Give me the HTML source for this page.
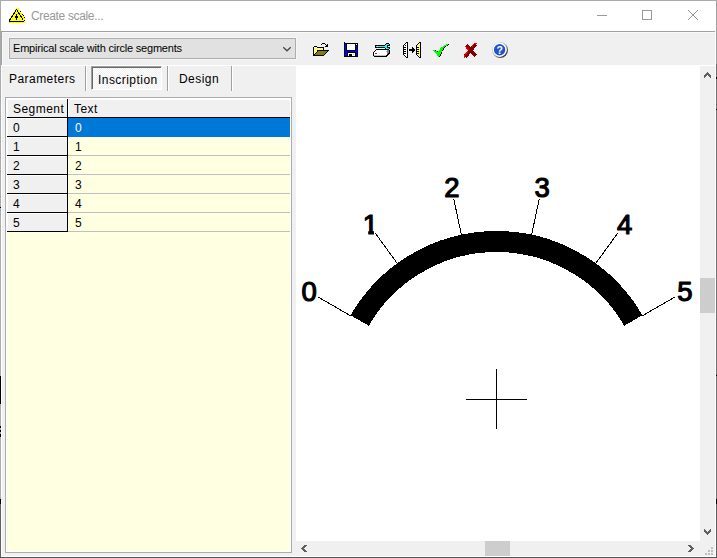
<!DOCTYPE html>
<html>
<head>
<meta charset="utf-8">
<title>Create scale...</title>
<style>
html,body{margin:0;padding:0;}
body{width:717px;height:558px;overflow:hidden;background:#f0f0f0;font-family:"Liberation Sans",sans-serif;font-size:12px;color:#000;}
#win{position:relative;width:717px;height:558px;overflow:hidden;background:#f0f0f0;}
.abs{position:absolute;}
.t{position:absolute;white-space:nowrap;line-height:1;}
/* title bar */
#titlebar{left:1px;top:1px;width:715px;height:30px;background:#fff;}
#title{left:31px;top:10px;font-size:12px;color:#999;letter-spacing:-0.35px;}
/* borders */
#bl{left:0;top:0;width:1px;height:558px;background:linear-gradient(#aaa 0,#aaa 376px,#000 376px,#000 404px,#aaa 404px,#aaa 426px,#000 426px,#000 428px,#aaa 428px,#aaa 430px,#000 430px,#000 432px,#aaa 432px,#aaa 434px,#000 434px,#000 437px,#aaa 437px,#aaa 499px,#000 499px,#000 504px,#606060 504px);}
#br{left:716px;top:0;width:1px;height:558px;background:linear-gradient(#a0a0a0 0,#a0a0a0 64px,#707070 64px,#707070 499px,#000 499px,#000 504px,#606060 504px);}
#bt{left:0;top:0;width:717px;height:1px;background:#aaa;}
#bb{left:0;top:557px;width:717px;height:1px;background:#555;}
/* combobox */
#combo{left:9px;top:38px;width:285px;height:19px;border:1px solid #adadad;background:#e1e1e1;box-shadow:0 0 0 1px #f7f7f7;}
#combotext{left:13px;top:43px;font-size:11px;letter-spacing:-0.2px;}
/* tabs */
.sep{width:1px;height:25px;top:66px;background:#a0a0a0;}
.sepw{width:1px;height:25px;top:66px;background:#fff;}
.tab{font-size:12px;top:73px;letter-spacing:0.45px;}
/* grid */
#grid{left:5px;top:97px;width:285px;height:454px;border:1px solid #abadb3;background:#fff;}
#gridin{left:7px;top:99px;width:283px;height:452px;background:#ffffe1;}
.fix{left:7px;width:60px;height:18px;background:#f0f0f0;border-right:1px solid #000;border-bottom:1px solid #000;box-shadow:inset 1px 1px 0 #fff;}
.cell{left:68px;width:222px;height:18px;border-bottom:1px solid #c0c0c0;}
.gt{font-size:12px;letter-spacing:0.45px;}
/* canvas */
#canvas{left:296px;top:65px;width:404px;height:476px;background:#fff;}
#vsb{left:700px;top:66px;width:15px;height:475px;background:#f0f0f0;}
#hsb{left:296px;top:541px;width:404px;height:15px;background:#f0f0f0;}
.thumb{background:#cdcdcd;}
</style>
</head>
<body>
<div id="win">
  <div class="abs" id="titlebar"></div>
  <div class="t" id="title">Create scale...</div>

  <!-- client bevel -->
  <div class="abs" style="left:1px;top:31px;width:714px;height:1px;background:#a0a0a0"></div>
  <div class="abs" style="left:1px;top:31px;width:1px;height:34px;background:#a0a0a0"></div>
  <div class="abs" style="left:2px;top:32px;width:713px;height:1px;background:#fafafa"></div>
  <div class="abs" style="left:2px;top:32px;width:1px;height:33px;background:#fafafa"></div>
  <div class="abs" style="left:1px;top:65px;width:1px;height:492px;background:#fff"></div>
  <div class="abs" style="left:715px;top:31px;width:1px;height:526px;background:#fff"></div>
  <div class="abs" style="left:1px;top:556px;width:715px;height:1px;background:#fff"></div>

  <!-- combobox -->
  <div class="abs" id="combo"></div>
  <div class="t" id="combotext">Empirical scale with circle segments</div>

  <!-- left panel top highlight -->
  <div class="abs" style="left:1px;top:65px;width:295px;height:1px;background:#fff"></div>

  <!-- tabs -->
  <div class="t tab" style="left:9px">Parameters</div>
  <div class="abs sep" style="left:85px"></div><div class="abs sepw" style="left:86px"></div>
  <div class="abs" id="tabsel" style="left:91px;top:66px;width:71px;height:24px;background:repeating-conic-gradient(#fff 0% 25%, #f0f0f0 0% 50%) 0 0/2px 2px;box-sizing:border-box;border-top:1px solid #a0a0a0;border-left:1px solid #a0a0a0;border-right:1px solid #fff;border-bottom:1px solid #fff;"></div>
  <div class="abs" style="left:92px;top:67px;width:69px;height:1px;background:#696969"></div>
  <div class="abs" style="left:92px;top:67px;width:1px;height:22px;background:#696969"></div>
  <div class="t tab" style="left:98px;top:74px">Inscription</div>
  <div class="abs sep" style="left:167px"></div><div class="abs sepw" style="left:168px"></div>
  <div class="t tab" style="left:179px">Design</div>
  <div class="abs sep" style="left:231px"></div><div class="abs sepw" style="left:232px"></div>

  <!-- grid -->
  <div class="abs" id="grid"></div>
  <div class="abs" id="gridin"></div>
  <div class="abs fix" style="top:99px"></div>
  <div class="abs" style="left:68px;top:99px;width:222px;height:18px;background:#f0f0f0;border-bottom:1px solid #000;box-shadow:inset 1px 1px 0 #fff"></div>
  <div class="t gt" style="left:13px;top:103px">Segment</div>
  <div class="t gt" style="left:74px;top:103px">Text</div>

  <div class="abs fix" style="top:118px"></div>
  <div class="abs cell" style="top:118px;background:#0078d7;border-bottom-color:#0078d7"></div>
  <div class="t gt" style="left:13px;top:122px">0</div>
  <div class="t gt" style="left:75px;top:122px;color:#fff">0</div>

  <div class="abs fix" style="top:137px"></div>
  <div class="abs cell" style="top:137px"></div>
  <div class="t gt" style="left:13px;top:141px">1</div>
  <div class="t gt" style="left:75px;top:141px">1</div>

  <div class="abs fix" style="top:156px"></div>
  <div class="abs cell" style="top:156px"></div>
  <div class="t gt" style="left:13px;top:160px">2</div>
  <div class="t gt" style="left:75px;top:160px">2</div>

  <div class="abs fix" style="top:175px"></div>
  <div class="abs cell" style="top:175px"></div>
  <div class="t gt" style="left:13px;top:179px">3</div>
  <div class="t gt" style="left:75px;top:179px">3</div>

  <div class="abs fix" style="top:194px"></div>
  <div class="abs cell" style="top:194px"></div>
  <div class="t gt" style="left:13px;top:198px">4</div>
  <div class="t gt" style="left:75px;top:198px">4</div>

  <div class="abs fix" style="top:213px"></div>
  <div class="abs cell" style="top:213px"></div>
  <div class="t gt" style="left:13px;top:217px">5</div>
  <div class="t gt" style="left:75px;top:217px">5</div>

  <!-- canvas -->
  <div class="abs" id="canvas"></div>
  <div class="abs" id="vsb"></div>
  <div class="abs" id="hsb"></div>
  <div class="abs thumb" style="left:700px;top:278px;width:15px;height:35px"></div>
  <div class="abs thumb" style="left:485px;top:541px;width:25px;height:15px"></div>
  <div class="abs" style="left:700px;top:541px;width:15px;height:15px;background:#f0f0f0"></div>
  <div class="abs" style="left:296px;top:65px;width:419px;height:1px;background:#fff"></div>

  <svg class="abs" id="scale" style="left:296px;top:65px" width="404" height="476" viewBox="296 65 404 476" shape-rendering="crispEdges">
    <defs><clipPath id="c1" clipPathUnits="userSpaceOnUse"><polygon points="355,205 374,205 374,240 368.3,240 368.3,227 355,227"/></clipPath></defs>
    <path d="M359.67 320.50 A158 158 0 0 1 633.33 320.50" fill="none" stroke="#000" stroke-width="21"/>
    <line x1="351.44" y1="316.25" x2="318.10" y2="297.00" stroke="#000" stroke-width="1"/>
    <text x="309.2" y="301.0" text-anchor="middle" font-family="Liberation Sans, sans-serif" font-size="27.5" fill="#000" stroke="#000" stroke-width="1.2" stroke-linejoin="round">0</text>
    <line x1="398.05" y1="264.49" x2="375.42" y2="233.34" stroke="#000" stroke-width="1"/>
    <text x="370.4" y="233.9" text-anchor="middle" font-family="Liberation Sans, sans-serif" font-size="27.5" fill="#000" stroke="#000" stroke-width="1.2" stroke-linejoin="round" clip-path="url(#c1)">1</text>
    <line x1="461.67" y1="236.16" x2="453.67" y2="198.50" stroke="#000" stroke-width="1"/>
    <text x="452.0" y="197.2" text-anchor="middle" font-family="Liberation Sans, sans-serif" font-size="27.5" fill="#000" stroke="#000" stroke-width="1.2" stroke-linejoin="round">2</text>
    <line x1="531.33" y1="236.16" x2="539.33" y2="198.50" stroke="#000" stroke-width="1"/>
    <text x="542.2" y="197.2" text-anchor="middle" font-family="Liberation Sans, sans-serif" font-size="27.5" fill="#000" stroke="#000" stroke-width="1.2" stroke-linejoin="round">3</text>
    <line x1="594.95" y1="264.49" x2="617.58" y2="233.34" stroke="#000" stroke-width="1"/>
    <text x="624.6" y="233.9" text-anchor="middle" font-family="Liberation Sans, sans-serif" font-size="27.5" fill="#000" stroke="#000" stroke-width="1.2" stroke-linejoin="round">4</text>
    <line x1="641.56" y1="316.25" x2="674.90" y2="297.00" stroke="#000" stroke-width="1"/>
    <text x="685.0" y="301.0" text-anchor="middle" font-family="Liberation Sans, sans-serif" font-size="27.5" fill="#000" stroke="#000" stroke-width="1.2" stroke-linejoin="round">5</text>
    <rect x="466" y="399" width="61" height="1" fill="#000"/>
    <rect x="496" y="369" width="1" height="60" fill="#000"/>  </svg>

  <svg class="abs" id="icons" style="left:0;top:0" width="717" height="558" viewBox="0 0 717 558" shape-rendering="crispEdges">

    <!-- title icon -->
    <polygon points="16.5,7.6 8.6,19.5 8.6,23 25,23 25,18 18,7.6" fill="#ff0"/>
    <path d="M9.5 20.5 L16.5 9.5 L23.5 20.5" fill="none" stroke="#000" stroke-width="1"/>
    <rect x="9" y="19" width="1" height="3" fill="#000"/>
    <rect x="9" y="21" width="15" height="1" fill="#000"/>
    <rect x="16" y="14" width="1" height="6" fill="#000"/>
    <rect x="15" y="16" width="3" height="2" fill="#000"/>
    <rect x="20" y="11" width="1" height="1" fill="#000"/>
    <rect x="22" y="14" width="1" height="1" fill="#000"/>
    <rect x="23" y="15" width="1" height="1" fill="#000"/>
    <rect x="24" y="17" width="1" height="1" fill="#000"/>
    <rect x="24" y="20" width="1" height="1" fill="#000"/>
    <rect x="322" y="43" width="3" height="1" fill="#000"/>
    <rect x="321" y="44" width="1" height="1" fill="#000"/>
    <rect x="325" y="44" width="1" height="1" fill="#000"/>
    <rect x="327" y="44" width="1" height="1" fill="#000"/>
    <rect x="326" y="45" width="2" height="1" fill="#000"/>
    <rect x="314" y="46" width="3" height="1" fill="#000"/>
    <rect x="325" y="46" width="3" height="1" fill="#000"/>
    <rect x="313" y="47" width="1" height="1" fill="#000"/>
    <rect x="314" y="47" width="1" height="1" fill="#fff"/>
    <rect x="315" y="47" width="1" height="1" fill="#ff0"/>
    <rect x="316" y="47" width="1" height="1" fill="#fff"/>
    <rect x="317" y="47" width="7" height="1" fill="#000"/>
    <rect x="313" y="48" width="1" height="1" fill="#000"/>
    <rect x="314" y="48" width="1" height="1" fill="#ff0"/>
    <rect x="315" y="48" width="1" height="1" fill="#fff"/>
    <rect x="316" y="48" width="1" height="1" fill="#ff0"/>
    <rect x="317" y="48" width="1" height="1" fill="#fff"/>
    <rect x="318" y="48" width="1" height="1" fill="#ff0"/>
    <rect x="319" y="48" width="1" height="1" fill="#fff"/>
    <rect x="320" y="48" width="1" height="1" fill="#ff0"/>
    <rect x="321" y="48" width="1" height="1" fill="#fff"/>
    <rect x="322" y="48" width="1" height="1" fill="#ff0"/>
    <rect x="323" y="48" width="1" height="1" fill="#000"/>
    <rect x="313" y="49" width="1" height="1" fill="#000"/>
    <rect x="314" y="49" width="1" height="1" fill="#fff"/>
    <rect x="315" y="49" width="1" height="1" fill="#ff0"/>
    <rect x="316" y="49" width="1" height="1" fill="#fff"/>
    <rect x="317" y="49" width="1" height="1" fill="#ff0"/>
    <rect x="318" y="49" width="1" height="1" fill="#fff"/>
    <rect x="319" y="49" width="1" height="1" fill="#ff0"/>
    <rect x="320" y="49" width="1" height="1" fill="#fff"/>
    <rect x="321" y="49" width="1" height="1" fill="#ff0"/>
    <rect x="322" y="49" width="1" height="1" fill="#fff"/>
    <rect x="323" y="49" width="1" height="1" fill="#000"/>
    <rect x="313" y="50" width="1" height="1" fill="#000"/>
    <rect x="314" y="50" width="1" height="1" fill="#ff0"/>
    <rect x="315" y="50" width="1" height="1" fill="#fff"/>
    <rect x="316" y="50" width="1" height="1" fill="#ff0"/>
    <rect x="317" y="50" width="12" height="1" fill="#000"/>
    <rect x="313" y="51" width="1" height="1" fill="#000"/>
    <rect x="314" y="51" width="1" height="1" fill="#fff"/>
    <rect x="315" y="51" width="1" height="1" fill="#ff0"/>
    <rect x="316" y="51" width="1" height="1" fill="#fff"/>
    <rect x="317" y="51" width="1" height="1" fill="#000"/>
    <rect x="318" y="51" width="9" height="1" fill="#808000"/>
    <rect x="327" y="51" width="1" height="1" fill="#000"/>
    <rect x="313" y="52" width="1" height="1" fill="#000"/>
    <rect x="314" y="52" width="1" height="1" fill="#ff0"/>
    <rect x="315" y="52" width="1" height="1" fill="#fff"/>
    <rect x="316" y="52" width="1" height="1" fill="#000"/>
    <rect x="317" y="52" width="9" height="1" fill="#808000"/>
    <rect x="326" y="52" width="1" height="1" fill="#000"/>
    <rect x="313" y="53" width="1" height="1" fill="#000"/>
    <rect x="314" y="53" width="1" height="1" fill="#fff"/>
    <rect x="315" y="53" width="1" height="1" fill="#000"/>
    <rect x="316" y="53" width="9" height="1" fill="#808000"/>
    <rect x="325" y="53" width="1" height="1" fill="#000"/>
    <rect x="313" y="54" width="2" height="1" fill="#000"/>
    <rect x="315" y="54" width="9" height="1" fill="#808000"/>
    <rect x="324" y="54" width="1" height="1" fill="#000"/>
    <rect x="313" y="55" width="11" height="1" fill="#000"/>
    <rect x="344" y="42" width="1" height="1" fill="#000"/>
    <rect x="344" y="43" width="14" height="1" fill="#000"/>
    <rect x="344" y="44" width="1" height="1" fill="#000"/>
    <rect x="345" y="44" width="1" height="1" fill="#00f"/>
    <rect x="346" y="44" width="1" height="1" fill="#000"/>
    <rect x="347" y="44" width="8" height="1" fill="#fff"/>
    <rect x="355" y="44" width="1" height="1" fill="#000"/>
    <rect x="356" y="44" width="1" height="1" fill="#fff"/>
    <rect x="357" y="44" width="1" height="1" fill="#000"/>
    <rect x="344" y="45" width="1" height="1" fill="#000"/>
    <rect x="345" y="45" width="1" height="1" fill="#00f"/>
    <rect x="346" y="45" width="1" height="1" fill="#000"/>
    <rect x="347" y="45" width="8" height="1" fill="#fff"/>
    <rect x="355" y="45" width="3" height="1" fill="#000"/>
    <rect x="344" y="46" width="1" height="1" fill="#000"/>
    <rect x="345" y="46" width="1" height="1" fill="#00f"/>
    <rect x="346" y="46" width="1" height="1" fill="#000"/>
    <rect x="347" y="46" width="8" height="1" fill="#fff"/>
    <rect x="355" y="46" width="1" height="1" fill="#000"/>
    <rect x="356" y="46" width="1" height="1" fill="#00f"/>
    <rect x="357" y="46" width="1" height="1" fill="#000"/>
    <rect x="344" y="47" width="1" height="1" fill="#000"/>
    <rect x="345" y="47" width="1" height="1" fill="#00f"/>
    <rect x="346" y="47" width="1" height="1" fill="#000"/>
    <rect x="347" y="47" width="8" height="1" fill="#fff"/>
    <rect x="355" y="47" width="1" height="1" fill="#000"/>
    <rect x="356" y="47" width="1" height="1" fill="#00f"/>
    <rect x="357" y="47" width="1" height="1" fill="#000"/>
    <rect x="344" y="48" width="1" height="1" fill="#000"/>
    <rect x="345" y="48" width="1" height="1" fill="#00f"/>
    <rect x="346" y="48" width="1" height="1" fill="#000"/>
    <rect x="347" y="48" width="8" height="1" fill="#fff"/>
    <rect x="355" y="48" width="1" height="1" fill="#000"/>
    <rect x="356" y="48" width="1" height="1" fill="#00f"/>
    <rect x="357" y="48" width="1" height="1" fill="#000"/>
    <rect x="344" y="49" width="1" height="1" fill="#000"/>
    <rect x="345" y="49" width="1" height="1" fill="#00f"/>
    <rect x="346" y="49" width="1" height="1" fill="#000"/>
    <rect x="347" y="49" width="8" height="1" fill="#fff"/>
    <rect x="355" y="49" width="1" height="1" fill="#000"/>
    <rect x="356" y="49" width="1" height="1" fill="#00f"/>
    <rect x="357" y="49" width="1" height="1" fill="#000"/>
    <rect x="344" y="50" width="1" height="1" fill="#000"/>
    <rect x="345" y="50" width="1" height="1" fill="#00f"/>
    <rect x="346" y="50" width="10" height="1" fill="#000"/>
    <rect x="356" y="50" width="1" height="1" fill="#00f"/>
    <rect x="357" y="50" width="1" height="1" fill="#000"/>
    <rect x="344" y="51" width="1" height="1" fill="#000"/>
    <rect x="345" y="51" width="12" height="1" fill="#00f"/>
    <rect x="357" y="51" width="1" height="1" fill="#000"/>
    <rect x="344" y="52" width="1" height="1" fill="#000"/>
    <rect x="345" y="52" width="2" height="1" fill="#00f"/>
    <rect x="347" y="52" width="9" height="1" fill="#000"/>
    <rect x="356" y="52" width="1" height="1" fill="#00f"/>
    <rect x="357" y="52" width="1" height="1" fill="#000"/>
    <rect x="344" y="53" width="1" height="1" fill="#000"/>
    <rect x="345" y="53" width="2" height="1" fill="#00f"/>
    <rect x="347" y="53" width="1" height="1" fill="#000"/>
    <rect x="348" y="53" width="7" height="1" fill="#fff"/>
    <rect x="355" y="53" width="1" height="1" fill="#000"/>
    <rect x="356" y="53" width="1" height="1" fill="#00f"/>
    <rect x="357" y="53" width="1" height="1" fill="#000"/>
    <rect x="344" y="54" width="1" height="1" fill="#000"/>
    <rect x="345" y="54" width="2" height="1" fill="#00f"/>
    <rect x="347" y="54" width="1" height="1" fill="#000"/>
    <rect x="348" y="54" width="1" height="1" fill="#fff"/>
    <rect x="349" y="54" width="3" height="1" fill="#000"/>
    <rect x="352" y="54" width="1" height="1" fill="#fff"/>
    <rect x="353" y="54" width="1" height="1" fill="#c0c0c0"/>
    <rect x="354" y="54" width="1" height="1" fill="#fff"/>
    <rect x="355" y="54" width="1" height="1" fill="#000"/>
    <rect x="356" y="54" width="1" height="1" fill="#00f"/>
    <rect x="357" y="54" width="1" height="1" fill="#000"/>
    <rect x="344" y="55" width="1" height="1" fill="#000"/>
    <rect x="345" y="55" width="2" height="1" fill="#00f"/>
    <rect x="347" y="55" width="1" height="1" fill="#000"/>
    <rect x="348" y="55" width="1" height="1" fill="#fff"/>
    <rect x="349" y="55" width="3" height="1" fill="#000"/>
    <rect x="352" y="55" width="3" height="1" fill="#fff"/>
    <rect x="355" y="55" width="1" height="1" fill="#000"/>
    <rect x="356" y="55" width="1" height="1" fill="#00f"/>
    <rect x="357" y="55" width="1" height="1" fill="#000"/>
    <rect x="344" y="56" width="14" height="1" fill="#000"/>
    <rect x="386" y="43" width="3" height="1" fill="#000"/>
    <rect x="385" y="44" width="1" height="1" fill="#000"/>
    <rect x="386" y="44" width="3" height="1" fill="#0ff"/>
    <rect x="389" y="44" width="1" height="1" fill="#000"/>
    <rect x="375" y="45" width="10" height="1" fill="#000"/>
    <rect x="385" y="45" width="2" height="1" fill="#0ff"/>
    <rect x="387" y="45" width="3" height="1" fill="#000"/>
    <rect x="375" y="46" width="1" height="1" fill="#000"/>
    <rect x="376" y="46" width="1" height="1" fill="#0ff"/>
    <rect x="377" y="46" width="1" height="1" fill="#fff"/>
    <rect x="378" y="46" width="9" height="1" fill="#0ff"/>
    <rect x="387" y="46" width="1" height="1" fill="#000"/>
    <rect x="375" y="47" width="10" height="1" fill="#000"/>
    <rect x="385" y="47" width="2" height="1" fill="#0ff"/>
    <rect x="387" y="47" width="3" height="1" fill="#000"/>
    <rect x="385" y="48" width="1" height="1" fill="#000"/>
    <rect x="386" y="48" width="3" height="1" fill="#0ff"/>
    <rect x="389" y="48" width="1" height="1" fill="#000"/>
    <rect x="376" y="49" width="13" height="1" fill="#000"/>
    <rect x="375" y="50" width="1" height="1" fill="#000"/>
    <rect x="376" y="50" width="11" height="1" fill="#fff"/>
    <rect x="387" y="50" width="2" height="1" fill="#808080"/>
    <rect x="389" y="50" width="1" height="1" fill="#000"/>
    <rect x="374" y="51" width="1" height="1" fill="#000"/>
    <rect x="375" y="51" width="11" height="1" fill="#fff"/>
    <rect x="386" y="51" width="1" height="1" fill="#c0c0c0"/>
    <rect x="387" y="51" width="2" height="1" fill="#808080"/>
    <rect x="389" y="51" width="1" height="1" fill="#000"/>
    <rect x="373" y="52" width="1" height="1" fill="#000"/>
    <rect x="374" y="52" width="13" height="1" fill="#fff"/>
    <rect x="387" y="52" width="2" height="1" fill="#808080"/>
    <rect x="389" y="52" width="1" height="1" fill="#000"/>
    <rect x="373" y="53" width="1" height="1" fill="#000"/>
    <rect x="374" y="53" width="1" height="1" fill="#fff"/>
    <rect x="375" y="53" width="2" height="1" fill="#f00"/>
    <rect x="377" y="53" width="10" height="1" fill="#fff"/>
    <rect x="387" y="53" width="1" height="1" fill="#808080"/>
    <rect x="388" y="53" width="2" height="1" fill="#000"/>
    <rect x="373" y="54" width="1" height="1" fill="#000"/>
    <rect x="374" y="54" width="13" height="1" fill="#fff"/>
    <rect x="387" y="54" width="2" height="1" fill="#000"/>
    <rect x="373" y="55" width="1" height="1" fill="#000"/>
    <rect x="374" y="55" width="12" height="1" fill="#c0c0c0"/>
    <rect x="386" y="55" width="2" height="1" fill="#000"/>
    <rect x="374" y="56" width="13" height="1" fill="#000"/>
    <rect x="406" y="42" width="2" height="1" fill="#000"/>
    <rect x="405" y="43" width="1" height="1" fill="#000"/>
    <rect x="406" y="43" width="1" height="1" fill="#fff"/>
    <rect x="407" y="43" width="1" height="1" fill="#000"/>
    <rect x="404" y="44" width="1" height="1" fill="#000"/>
    <rect x="405" y="44" width="2" height="1" fill="#fff"/>
    <rect x="407" y="44" width="1" height="1" fill="#000"/>
    <rect x="403" y="45" width="1" height="1" fill="#000"/>
    <rect x="404" y="45" width="1" height="1" fill="#fff"/>
    <rect x="405" y="45" width="1" height="1" fill="#000080"/>
    <rect x="406" y="45" width="1" height="1" fill="#fff"/>
    <rect x="407" y="45" width="1" height="1" fill="#000"/>
    <rect x="403" y="46" width="1" height="1" fill="#000"/>
    <rect x="404" y="46" width="3" height="1" fill="#fff"/>
    <rect x="407" y="46" width="1" height="1" fill="#000"/>
    <rect x="403" y="47" width="3" height="1" fill="#000"/>
    <rect x="406" y="47" width="1" height="1" fill="#fff"/>
    <rect x="407" y="47" width="1" height="1" fill="#000"/>
    <rect x="403" y="48" width="1" height="1" fill="#000"/>
    <rect x="404" y="48" width="3" height="1" fill="#fff"/>
    <rect x="407" y="48" width="1" height="1" fill="#000"/>
    <rect x="403" y="49" width="3" height="1" fill="#000"/>
    <rect x="406" y="49" width="1" height="1" fill="#fff"/>
    <rect x="407" y="49" width="1" height="1" fill="#000"/>
    <rect x="403" y="50" width="1" height="1" fill="#000"/>
    <rect x="404" y="50" width="3" height="1" fill="#fff"/>
    <rect x="407" y="50" width="1" height="1" fill="#000"/>
    <rect x="403" y="51" width="3" height="1" fill="#000"/>
    <rect x="406" y="51" width="1" height="1" fill="#fff"/>
    <rect x="407" y="51" width="1" height="1" fill="#000"/>
    <rect x="403" y="52" width="1" height="1" fill="#000"/>
    <rect x="404" y="52" width="3" height="1" fill="#fff"/>
    <rect x="407" y="52" width="1" height="1" fill="#000"/>
    <rect x="403" y="53" width="3" height="1" fill="#000"/>
    <rect x="406" y="53" width="1" height="1" fill="#fff"/>
    <rect x="407" y="53" width="1" height="1" fill="#000"/>
    <rect x="403" y="54" width="1" height="1" fill="#000"/>
    <rect x="404" y="54" width="3" height="1" fill="#fff"/>
    <rect x="407" y="54" width="1" height="1" fill="#000"/>
    <rect x="404" y="55" width="1" height="1" fill="#000"/>
    <rect x="405" y="55" width="2" height="1" fill="#fff"/>
    <rect x="407" y="55" width="1" height="1" fill="#000"/>
    <rect x="405" y="56" width="1" height="1" fill="#000"/>
    <rect x="406" y="56" width="1" height="1" fill="#fff"/>
    <rect x="407" y="56" width="1" height="1" fill="#000"/>
    <rect x="406" y="57" width="2" height="1" fill="#000"/>
    <rect x="419" y="42" width="2" height="1" fill="#000"/>
    <rect x="418" y="43" width="1" height="1" fill="#000"/>
    <rect x="419" y="43" width="1" height="1" fill="#ff0"/>
    <rect x="420" y="43" width="1" height="1" fill="#000"/>
    <rect x="417" y="44" width="1" height="1" fill="#000"/>
    <rect x="418" y="44" width="1" height="1" fill="#ff0"/>
    <rect x="419" y="44" width="1" height="1" fill="#fff"/>
    <rect x="420" y="44" width="1" height="1" fill="#000"/>
    <rect x="416" y="45" width="1" height="1" fill="#000"/>
    <rect x="417" y="45" width="1" height="1" fill="#ff0"/>
    <rect x="418" y="45" width="1" height="1" fill="#fff"/>
    <rect x="419" y="45" width="1" height="1" fill="#ff0"/>
    <rect x="420" y="45" width="1" height="1" fill="#000"/>
    <rect x="416" y="46" width="1" height="1" fill="#000"/>
    <rect x="417" y="46" width="1" height="1" fill="#fff"/>
    <rect x="418" y="46" width="1" height="1" fill="#ff0"/>
    <rect x="419" y="46" width="1" height="1" fill="#fff"/>
    <rect x="420" y="46" width="1" height="1" fill="#000"/>
    <rect x="416" y="47" width="3" height="1" fill="#000"/>
    <rect x="419" y="47" width="1" height="1" fill="#ff0"/>
    <rect x="420" y="47" width="1" height="1" fill="#000"/>
    <rect x="416" y="48" width="1" height="1" fill="#000"/>
    <rect x="417" y="48" width="1" height="1" fill="#fff"/>
    <rect x="418" y="48" width="1" height="1" fill="#ff0"/>
    <rect x="419" y="48" width="1" height="1" fill="#fff"/>
    <rect x="420" y="48" width="1" height="1" fill="#000"/>
    <rect x="416" y="49" width="3" height="1" fill="#000"/>
    <rect x="419" y="49" width="1" height="1" fill="#ff0"/>
    <rect x="420" y="49" width="1" height="1" fill="#000"/>
    <rect x="416" y="50" width="1" height="1" fill="#000"/>
    <rect x="417" y="50" width="1" height="1" fill="#fff"/>
    <rect x="418" y="50" width="1" height="1" fill="#ff0"/>
    <rect x="419" y="50" width="1" height="1" fill="#fff"/>
    <rect x="420" y="50" width="1" height="1" fill="#000"/>
    <rect x="416" y="51" width="3" height="1" fill="#000"/>
    <rect x="419" y="51" width="1" height="1" fill="#ff0"/>
    <rect x="420" y="51" width="1" height="1" fill="#000"/>
    <rect x="416" y="52" width="1" height="1" fill="#000"/>
    <rect x="417" y="52" width="1" height="1" fill="#fff"/>
    <rect x="418" y="52" width="1" height="1" fill="#ff0"/>
    <rect x="419" y="52" width="1" height="1" fill="#fff"/>
    <rect x="420" y="52" width="1" height="1" fill="#000"/>
    <rect x="416" y="53" width="3" height="1" fill="#000"/>
    <rect x="419" y="53" width="1" height="1" fill="#ff0"/>
    <rect x="420" y="53" width="1" height="1" fill="#000"/>
    <rect x="416" y="54" width="1" height="1" fill="#000"/>
    <rect x="417" y="54" width="1" height="1" fill="#fff"/>
    <rect x="418" y="54" width="1" height="1" fill="#ff0"/>
    <rect x="419" y="54" width="1" height="1" fill="#fff"/>
    <rect x="420" y="54" width="1" height="1" fill="#000"/>
    <rect x="417" y="55" width="1" height="1" fill="#000"/>
    <rect x="418" y="55" width="1" height="1" fill="#fff"/>
    <rect x="419" y="55" width="1" height="1" fill="#ff0"/>
    <rect x="420" y="55" width="1" height="1" fill="#000"/>
    <rect x="418" y="56" width="1" height="1" fill="#000"/>
    <rect x="419" y="56" width="1" height="1" fill="#fff"/>
    <rect x="420" y="56" width="1" height="1" fill="#000"/>
    <rect x="419" y="57" width="2" height="1" fill="#000"/>
    <rect x="412" y="47" width="1" height="1" fill="#000"/>
    <rect x="412" y="48" width="2" height="1" fill="#000"/>
    <rect x="409" y="49" width="6" height="1" fill="#000"/>
    <rect x="409" y="50" width="6" height="1" fill="#000"/>
    <rect x="412" y="51" width="2" height="1" fill="#000"/>
    <rect x="412" y="52" width="1" height="1" fill="#000"/>
    <rect x="446" y="44" width="2" height="1" fill="#0f0"/>
    <rect x="448" y="44" width="1" height="1" fill="#000"/>
    <rect x="444" y="45" width="3" height="1" fill="#0f0"/>
    <rect x="447" y="45" width="1" height="1" fill="#000"/>
    <rect x="443" y="46" width="2" height="1" fill="#0f0"/>
    <rect x="445" y="46" width="1" height="1" fill="#000"/>
    <rect x="441" y="47" width="3" height="1" fill="#0f0"/>
    <rect x="444" y="47" width="1" height="1" fill="#000"/>
    <rect x="440" y="48" width="3" height="1" fill="#0f0"/>
    <rect x="443" y="48" width="1" height="1" fill="#000"/>
    <rect x="440" y="49" width="3" height="1" fill="#0f0"/>
    <rect x="443" y="49" width="1" height="1" fill="#000"/>
    <rect x="433" y="50" width="2" height="1" fill="#0f0"/>
    <rect x="435" y="50" width="1" height="1" fill="#000"/>
    <rect x="439" y="50" width="3" height="1" fill="#0f0"/>
    <rect x="442" y="50" width="1" height="1" fill="#000"/>
    <rect x="434" y="51" width="3" height="1" fill="#0f0"/>
    <rect x="437" y="51" width="1" height="1" fill="#000"/>
    <rect x="438" y="51" width="4" height="1" fill="#0f0"/>
    <rect x="435" y="52" width="6" height="1" fill="#0f0"/>
    <rect x="441" y="52" width="1" height="1" fill="#000"/>
    <rect x="436" y="53" width="5" height="1" fill="#0f0"/>
    <rect x="441" y="53" width="1" height="1" fill="#000"/>
    <rect x="437" y="54" width="3" height="1" fill="#0f0"/>
    <rect x="440" y="54" width="1" height="1" fill="#000"/>
    <rect x="437" y="55" width="3" height="1" fill="#0f0"/>
    <rect x="440" y="55" width="1" height="1" fill="#000"/>
    <rect x="438" y="56" width="1" height="1" fill="#0f0"/>
    <rect x="439" y="56" width="1" height="1" fill="#000"/>


    <!-- window controls -->
    <rect x="597" y="15" width="10" height="1" fill="#999"/>
    <rect x="642.5" y="10.5" width="9" height="9" fill="none" stroke="#999" stroke-width="1"/>
    <!-- scroll arrows -->
    <g fill="#606060">
      <rect x="707" y="72" width="1" height="1"/>
      <rect x="706" y="73" width="3" height="1"/>
      <rect x="705" y="74" width="5" height="1"/>
      <rect x="704" y="75" width="3" height="1"/>
      <rect x="708" y="75" width="3" height="1"/>
      <rect x="704" y="76" width="2" height="1"/>
      <rect x="709" y="76" width="2" height="1"/>
      <rect x="704" y="77" width="1" height="1"/>
      <rect x="710" y="77" width="1" height="1"/>
      <rect x="704" y="529" width="1" height="1"/>
      <rect x="710" y="529" width="1" height="1"/>
      <rect x="704" y="530" width="2" height="1"/>
      <rect x="709" y="530" width="2" height="1"/>
      <rect x="704" y="531" width="3" height="1"/>
      <rect x="708" y="531" width="3" height="1"/>
      <rect x="705" y="532" width="5" height="1"/>
      <rect x="706" y="533" width="3" height="1"/>
      <rect x="707" y="534" width="1" height="1"/>
      <rect x="304" y="545" width="3" height="1"/>
      <rect x="303" y="546" width="3" height="1"/>
      <rect x="302" y="547" width="3" height="1"/>
      <rect x="301" y="548" width="3" height="1"/>
      <rect x="302" y="549" width="3" height="1"/>
      <rect x="303" y="550" width="3" height="1"/>
      <rect x="304" y="551" width="3" height="1"/>
      <rect x="688" y="545" width="3" height="1"/>
      <rect x="689" y="546" width="3" height="1"/>
      <rect x="690" y="547" width="3" height="1"/>
      <rect x="691" y="548" width="3" height="1"/>
      <rect x="690" y="549" width="3" height="1"/>
      <rect x="689" y="550" width="3" height="1"/>
      <rect x="688" y="551" width="3" height="1"/>
    </g>
    <!-- size grip -->
    <g fill="#bfbfbf">
      <rect x="711" y="547" width="2" height="2"/>
      <rect x="708" y="550" width="2" height="2"/><rect x="711" y="550" width="2" height="2"/>
      <rect x="705" y="553" width="2" height="2"/><rect x="708" y="553" width="2" height="2"/><rect x="711" y="553" width="2" height="2"/>
    </g>
    <!-- X icon -->
    <g>
      <line x1="466" y1="45.2" x2="475.8" y2="55.8" stroke="#800000" stroke-width="3.8"/>
      <line x1="475.7" y1="43.9" x2="465" y2="56.8" stroke="#800000" stroke-width="3.8"/>
      <line x1="465.4" y1="46.6" x2="468.8" y2="50.2" stroke="#f00" stroke-width="1"/>
      <line x1="474.4" y1="43.5" x2="476.8" y2="43.5" stroke="#f00" stroke-width="1"/>
      <line x1="471.9" y1="46.7" x2="474.4" y2="43.6" stroke="#f00" stroke-width="1"/>
      <line x1="464.6" y1="55.3" x2="468.6" y2="50.6" stroke="#f00" stroke-width="1"/>
      <line x1="464.5" y1="55" x2="464.5" y2="57.5" stroke="#f00" stroke-width="1"/>
    </g>
  </svg>
  <svg class="abs" id="aa" style="left:0;top:0" width="717" height="558" viewBox="0 0 717 558">
    <path d="M688 10 L698 20 M698 10 L688 20" stroke="#999" stroke-width="1" fill="none"/>
    <path d="M283.3 47.2 L287 50.8 L290.7 47.2" stroke="#444" stroke-width="1.2" fill="none"/>
  </svg>
  <svg class="abs" id="helpicon" style="left:490px;top:40px" width="20" height="20" viewBox="490 40 20 20">
    <defs><linearGradient id="hg" x1="0.15" y1="0.15" x2="0.85" y2="0.85"><stop offset="0" stop-color="#e0e0e4"/><stop offset="0.5" stop-color="#a8a8b0"/><stop offset="1" stop-color="#2a2a34"/></linearGradient></defs>
    <circle cx="500" cy="50" r="8" fill="url(#hg)"/>
    <circle cx="499.75" cy="49.75" r="7.15" fill="#fbfdff"/>
    <circle cx="499.6" cy="49.7" r="5.7" fill="#2352cc"/>
    <text x="499.7" y="53.5" text-anchor="middle" font-family="Liberation Sans, sans-serif" font-weight="bold" font-size="10.5" fill="#fff">?</text>
  </svg>
  <div class="abs" id="bl"></div>
  <div class="abs" id="br"></div>
  <div class="abs" id="bt"></div>
  <div class="abs" id="bb"></div>
  <div class="abs" style="left:0;top:207px;width:1px;height:1px;background:#000"></div>
  <div class="abs" style="left:716px;top:77px;width:1px;height:2px;background:#000"></div>
  <div class="abs" style="left:716px;top:109px;width:1px;height:1px;background:#000"></div>
  <div class="abs" style="left:716px;top:375px;width:1px;height:1px;background:#000"></div>
</div>
</body>
</html>
